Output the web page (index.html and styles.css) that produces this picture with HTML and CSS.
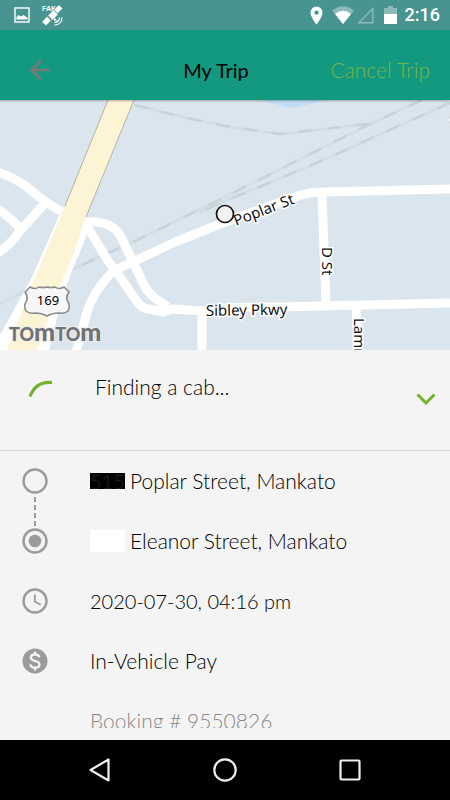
FILE: index.html
```html
<!DOCTYPE html>
<html lang="en">
<head>
  <meta charset="UTF-8" />
  <meta name="viewport" content="width=device-width, initial-scale=1.0" />
  <title>My Trip</title>
  <link rel="stylesheet" href="styles.css">
</head>
<body>
  <!-- System status bar -->
  <div class="status-bar">
    <div class="status-left">
      <svg width="16" height="16" viewBox="0 0 16 16" aria-hidden="true">
        <rect x="1" y="1" width="14" height="14" fill="none" stroke="#fff" stroke-width="1.4"/>
        <path d="M2.500 12.500V10l2-2 2.500 1.500L9.500 8l2 1.500 2 1v2z" fill="#fff"/>
      </svg>
      <svg width="21" height="21" viewBox="0 0 21 21" aria-hidden="true">
        <text x="0" y="6" class="fake-label">FAK</text>
        <g fill="#fff" stroke="#479491" stroke-width=".3">
          <path d="M12 4.500L17 0l3.500 3.500-5 5z"/>
          <path d="M0 17L5 11.500l4 4L4 20.500z"/>
          <path d="M6 10.500l5.500-5.500 4.500 4.500-5.500 5.500z"/>
        </g>
        <path d="M12.500 20c4.500 0 7.500-3 7.500-7.500M12.500 17.500c3 0 5-2 5-5" fill="none" stroke="#fff" stroke-width="1.200"/>
        <path d="M11.500 12l4 4-3.500-.5z" fill="#fff"/>
      </svg>
    </div>
    <div class="status-right">
      <svg class="pin" width="13" height="19" viewBox="0 0 13 19" aria-hidden="true">
        <path fill="#fff" fill-rule="evenodd" d="M6.500.5A6 6 0 0 0 .5 6.500C.5 11 6.500 18.500 6.500 18.500s6-7.500 6-12a6 6 0 0 0-6-6zm0 3.900a2.200 2.200 0 1 1 0 4.400 2.200 2.200 0 0 1 0-4.400z"/>
      </svg>
      <svg class="wifi" width="22" height="18" viewBox="0 0 22 18" aria-hidden="true">
        <path d="M0 4.500Q11-4 22 4.500L11 18z" fill="#8bbab7"/>
        <path d="M3 8Q11 1.500 19 8l-8 10z" fill="#fff"/>
      </svg>
      <svg class="signal" width="17" height="18" viewBox="0 0 17 18" aria-hidden="true">
        <path d="M15.800 2.500v14.300H2z" fill="none" stroke="#8bbab7" stroke-width="1.500"/>
      </svg>
      <svg class="battery" width="13" height="18" viewBox="0 0 13 18" aria-hidden="true">
        <path d="M4 0h5v2h4v7H0V2h4z" fill="#8bbab7"/>
        <path d="M0 8h13v10H0z" fill="#fff"/>
      </svg>
      <span class="clock">2:16</span>
    </div>
  </div>

  <!-- App bar -->
  <header class="app-bar">
    <button class="back" aria-label="Back">
      <svg width="22" height="22" viewBox="0 0 22 22" aria-hidden="true">
        <path d="M21 11H2.500M12 1.500L2.500 11l9.500 9.500" fill="none" stroke="#7b7877" stroke-width="2.500"/>
      </svg>
    </button>
    <h1>My Trip</h1>
    <button class="cancel">Cancel Trip</button>
  </header>

  <main>
    <!-- Map -->
    <svg class="map" viewBox="0 0 450 250" preserveAspectRatio="xMidYMid slice" role="img" aria-label="Map of the pick-up point on Poplar St">
      <rect width="450" height="250" fill="#dae5ed"/>
      <path d="M258 0l34 8 35-8z" fill="#bfdcf5"/>
      <g class="rail">
        <path d="M134 5l53 13 38 8 55 8 88-10"/>
        <path d="M422 0l-54 25-143 72-92 45-56 25-59 28-18 9"/>
        <path d="M450 3L305 68l-80 33-25 11"/>
      </g>
      <g class="rail-dash">
        <path d="M134 5l53 13 38 8 55 8 88-10"/>
        <path d="M422 0l-54 25-143 72-92 45-56 25"/>
        <path d="M450 3L305 68l-80 33-25 11"/>
      </g>
      <g class="road">
        <path d="M-2 72Q20 80 32 91T64 113"/>
        <path d="M45 103L20 131Q11 144-2 153"/>
        <path d="M-2 109Q8 116 20 128"/>
        <path d="M86 122Q110 120 120 135L133 162 144 185Q149 196 168 207"/>
        <path d="M87 126L108 161 115 170 136 200Q141 208 148 209L163 212 172 209 205 211 225 208 322 206 450 203"/>
        <path d="M76 252L87 212Q93 192 113 171L137 160 173 143 225 122 298 96Q310 92 322 92L452 89"/>
        <path d="M322 94L326 206"/>
        <path d="M202 210V252"/>
        <path d="M356 206L358 252"/>
      </g>
      <circle cx="451" cy="20" r="2" fill="#fff"/>
      <path d="M65 106L58 118 32 177 0 235V250H49L63 195 73 168 86 138 89 119z" fill="#fff"/>
      <path d="M108 0L65 106 33 183 7 250H37L61 183 71 160 86 117 134 0z" fill="#fdf3d5"/>
      <path d="M108 0L65 106M134 0L86 117" fill="none" stroke="#aaa594" stroke-width=".8"/>
      <g class="map-text">
        <text transform="translate(236 126) rotate(-21)">Poplar St</text>
        <text transform="translate(322 147) rotate(90)">D St</text>
        <text transform="translate(206 216) rotate(-1)">Sibley Pkwy</text>
        <text transform="translate(354 218) rotate(90)">Lamr</text>
      </g>
      <!-- Route shield -->
      <path d="M30 187Q35 190 39 187 43 188 47 187 51 188 55 187 59 190 64 187L69 192Q66 196 67 200 71 206 68 211 65 214 59 213 52 213 47 216 42 213 35 213 29 214 26 211 23 206 27 200 28 196 25 192z" fill="#f7f7f7" stroke="#8b8b8b" stroke-width="1.500"/>
      <text class="shield" x="48" y="205">169</text>
      <text class="logo" x="9" y="241">TO<tspan class="logo-m">m</tspan>TO<tspan class="logo-m">m</tspan></text>
      <circle cx="225" cy="114" r="8.500" fill="#f3f3f3" stroke="#111" stroke-width="1.700"/>
    </svg>

    <!-- Trip status -->
    <section class="trip-status">
      <svg class="spinner" width="26" height="18" viewBox="0 0 26 18" aria-hidden="true">
        <path d="M2 16.500Q8 1 24 2.500" fill="none" stroke="#75b031" stroke-width="3.200"/>
      </svg>
      <p>Finding a cab...</p>
      <button class="expand" aria-label="Show trip details">
        <svg width="20" height="12" viewBox="0 0 20 12" aria-hidden="true">
          <path d="M1.500 1.500L10 10l8.500-8.500" fill="none" stroke="#75b031" stroke-width="3"/>
        </svg>
      </button>
    </section>

    <!-- Trip details -->
    <ul class="details">
      <li class="linked">
        <svg width="26" height="26" viewBox="0 0 26 26" aria-hidden="true">
          <circle cx="13" cy="13" r="11.500" fill="none" stroke="#9b9b9b" stroke-width="2.400"/>
        </svg>
        <span class="mask mask-dark">515</span>
        <span>Poplar Street, Mankato</span>
      </li>
      <li>
        <svg width="26" height="26" viewBox="0 0 26 26" aria-hidden="true">
          <circle cx="13" cy="13" r="11.500" fill="none" stroke="#9b9b9b" stroke-width="2.400"/>
          <circle cx="13" cy="13" r="6.300" fill="#9b9b9b"/>
        </svg>
        <span class="mask mask-light"></span>
        <span>Eleanor Street, Mankato</span>
      </li>
      <li class="pickup-time">
        <svg width="26" height="26" viewBox="0 0 26 26" aria-hidden="true">
          <circle cx="13" cy="13" r="11.500" fill="none" stroke="#9b9b9b" stroke-width="2.400"/>
          <path d="M12.800 6.500v7l6 3.300" fill="none" stroke="#9b9b9b" stroke-width="1.800"/>
        </svg>
        <span>2020-07-30, 04:16 pm</span>
      </li>
      <li>
        <svg width="26" height="26" viewBox="0 0 26 26" aria-hidden="true">
          <circle cx="13" cy="13" r="12.500" fill="#9b9b9b"/>
          <path d="M17.300 9.300C17 7.500 15.300 6.500 13 6.500c-2.500 0-4.200 1.200-4.200 3.100 0 4.500 8.700 2.300 8.700 6.800 0 2-1.900 3.200-4.400 3.200-2.700 0-4.500-1.200-4.700-3.300M13 3.500v3M13 19.500v3" fill="none" stroke="#f4f4f4" stroke-width="2.300"/>
        </svg>
        <span>In-Vehicle Pay</span>
      </li>
      <li class="booking"><span>Booking # 9550826</span></li>
    </ul>
  </main>

  <!-- System navigation -->
  <nav class="system-nav">
    <button aria-label="Back">
      <svg width="26" height="26" viewBox="0 0 26 26" aria-hidden="true">
        <path d="M21.500 2.500v21L3.500 13z" fill="none" stroke="#eee" stroke-width="2.200" stroke-linejoin="round"/>
      </svg>
    </button>
    <button aria-label="Home">
      <svg width="26" height="26" viewBox="0 0 26 26" aria-hidden="true">
        <circle cx="13" cy="13" r="10.700" fill="none" stroke="#eee" stroke-width="2.200"/>
      </svg>
    </button>
    <button aria-label="Recent apps">
      <svg width="26" height="26" viewBox="0 0 26 26" aria-hidden="true">
        <rect x="3.500" y="3.500" width="19" height="19" rx="1" fill="none" stroke="#eee" stroke-width="2.200"/>
      </svg>
    </button>
  </nav>
</body>
</html>
```
FILE: styles.css
```css
:root{
  --bar:#139980;
  --status:#479491;
  --green:#7cb342;
  --grey:#9b9b9b;
  --panel:#f4f4f4;
}
*{box-sizing:border-box;margin:0;padding:0}
body{
  font-family:'Lato',sans-serif;
  font-size:21px;
  font-weight:300;
  line-height:24px;
  color:#000;
  background:var(--panel);
  display:flex;
  flex-direction:column;
  min-height:100vh;
}
button{background:none;border:none;font:inherit;cursor:pointer}
svg{display:block;flex-shrink:0}

/* ── System status bar ── */
.status-bar{
  display:flex;
  justify-content:space-between;
  align-items:center;
  height:30px;
  padding:0 10px 0 14px;
  background:var(--status);
}
.status-left,.status-right{display:flex;align-items:center}
.status-left{gap:12px}
.fake-label{font:700 7px 'Liberation Sans',sans-serif;fill:#fff}
.wifi{margin-left:9px}
.signal{margin-left:3px}
.battery{margin:0 8px 0 10px}
.clock{font:500 18px/30px 'Roboto',sans-serif;color:#fff}

/* ── App bar ── */
.app-bar{
  position:relative;
  display:grid;
  grid-template-columns:1fr auto 1fr;
  align-items:center;
  height:70px;
  padding:10px 20px 0 29px;
  background:var(--bar);
  box-shadow:0 1px 2px rgba(0,0,0,.3);
}
.app-bar h1{font-size:20px;font-weight:400;padding-right:27px}
.back{justify-self:start}
.cancel{justify-self:end;color:var(--green);white-space:nowrap}

main{flex:1;display:flex;flex-direction:column}

/* ── Map ── */
.map{width:100%;height:250px}
.rail{fill:none;stroke:#d0dfe7;stroke-width:2.5}
.rail-dash{fill:none;stroke:#c8d3d7;stroke-width:2.5;stroke-dasharray:14 14}
.road{fill:none;stroke:#fff;stroke-width:9;stroke-linejoin:round}
.map-text{
  font:400 15px 'Noto Sans',sans-serif;
  fill:#111;
  stroke:#fff;
  stroke-width:3px;
  paint-order:stroke;
}
.shield{font:400 13px 'Noto Sans',sans-serif;text-anchor:middle}
.logo{font:900 18px 'Lato',sans-serif;fill:#707274;stroke:#eee;stroke-width:2px;paint-order:stroke}
.logo-m{font-size:25px}

/* ── Trip status ── */
.trip-status{
  display:flex;
  align-items:flex-start;
  height:101px;
  padding:25px 14px 0 28px;
  border-bottom:1px solid #d8d8d8;
}
.spinner{margin-top:5px}
.trip-status p{flex:1;margin-left:41px}
.expand{padding-top:18px}

/* ── Trip details ── */
.details{list-style:none;padding:0 22px}
.details li{
  position:relative;
  display:flex;
  align-items:center;
  height:60px;
}
.details svg{margin-right:42px}
.linked::after{
  content:'';
  position:absolute;
  left:12px;
  top:46px;
  width:2px;
  height:29px;
  background:repeating-linear-gradient(var(--grey) 0 5px,transparent 5px 8px);
}
.mask{width:35px;margin-right:5px}
.mask-dark{height:16px;font-size:20px;line-height:16px;background:#000;color:#222}
.mask-light{height:22px;background:#fff}
.details .pickup-time{font-size:20px}
.details .booking{height:37px;padding-left:68px;align-items:flex-end;color:#888}
.booking span{height:19px;overflow:hidden}

/* ── System navigation ── */
.system-nav{
  display:flex;
  justify-content:center;
  align-items:center;
  gap:99px;
  height:60px;
  background:#000;
}
```
